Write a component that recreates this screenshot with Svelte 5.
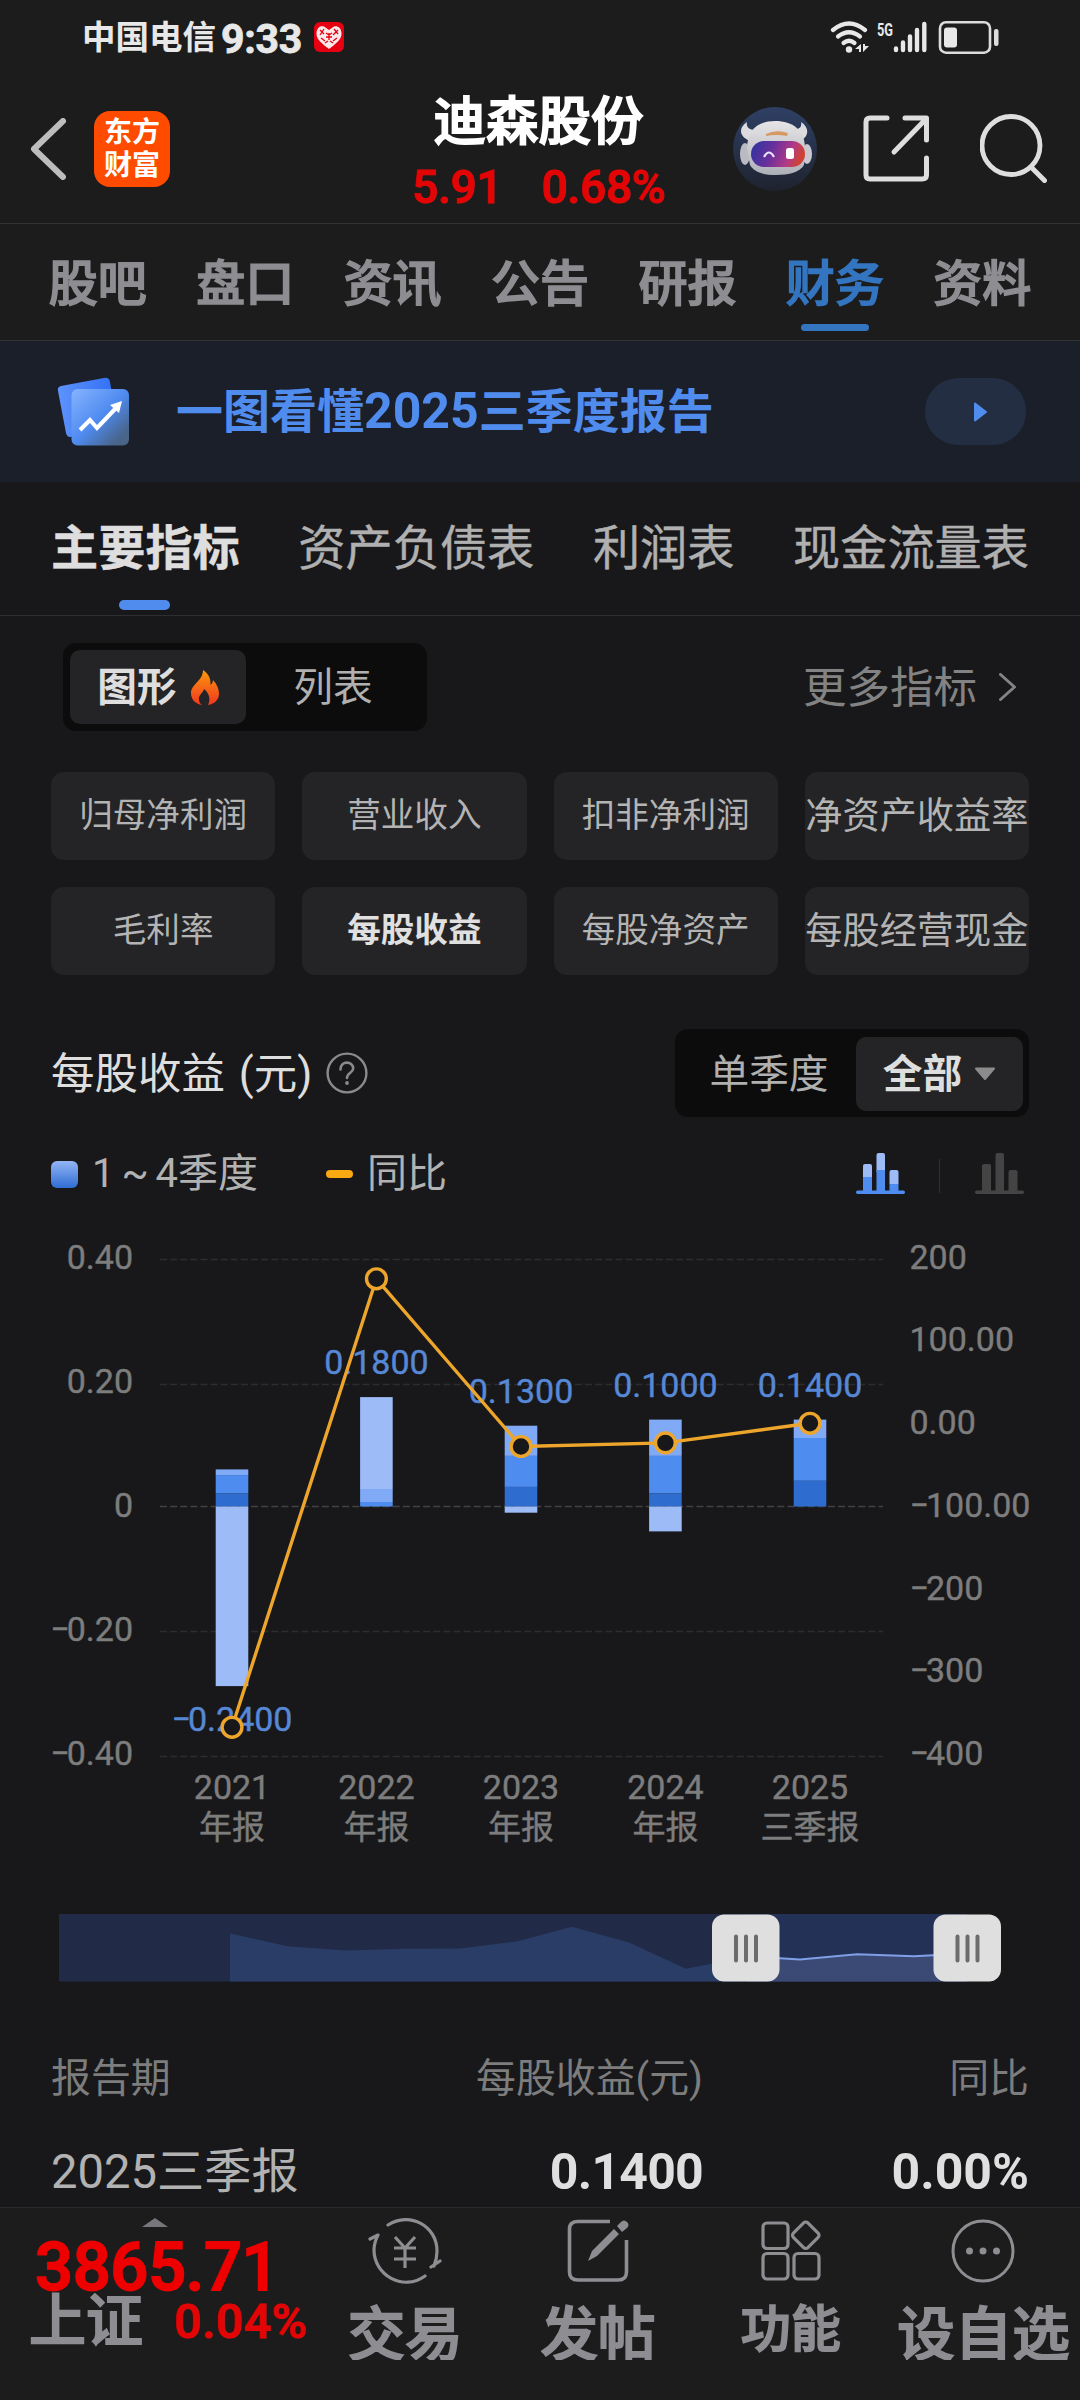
<script>
  // stock detail page, finance tab
  const tabs = ["股吧", "盘口", "资讯", "公告", "研报", "财务", "资料"];
  const reports = ["主要指标", "资产负债表", "利润表", "现金流量表"];
  const metrics = [
    "归母净利润",
    "营业收入",
    "扣非净利润",
    "净资产收益率",
    "毛利率",
    "每股收益",
    "每股净资产",
    "每股经营现金",
  ];

  let activeTab = $state("财务");
  let activeReport = $state("主要指标");
  let activeMetric = $state("每股收益");

  // quarter colours, Q1 is the darkest
  const q1 = "#2e6cd0";
  const q2 = "#4f8cf0";
  const q3 = "#80aaf5";
  const q4 = "#9cbbf7";

  const barWidth = 32.6;
  const gridLines = [1259.5, 1384.5, 1506.5, 1631.5, 1756.5];

  const leftAxis = ["0.40", "0.20", "0", "−0.20", "−0.40"];
  const rightAxis = ["200", "100.00", "0.00", "−100.00", "−200", "−300", "−400"];

  // the minus sign of the font is too wide for the axis
  const kern = (label) => (label[0] === "−" ? "0 -3" : "0");

  // segments: [top, bottom, colour]
  const years = [
    {
      year: "2021",
      name: "年报",
      x: 232,
      value: "−0.2400",
      labelY: 1731,
      pointY: 1727.3,
      segments: [
        [1469.4, 1475.1, q3],
        [1475.1, 1493.5, q2],
        [1493.5, 1506.5, q1],
        [1506.5, 1686.1, q4],
      ],
    },
    {
      year: "2022",
      name: "年报",
      x: 376.4,
      value: "0.1800",
      labelY: 1374,
      pointY: 1278.8,
      segments: [
        [1397.1, 1489, q4],
        [1489, 1502, q3],
        [1502, 1506.5, q2],
      ],
    },
    {
      year: "2023",
      name: "年报",
      x: 521,
      value: "0.1300",
      labelY: 1403,
      pointY: 1446.5,
      segments: [
        [1425.7, 1455.9, q3],
        [1455.9, 1486.9, q2],
        [1486.9, 1506.5, q1],
        [1506.5, 1512.7, q4],
      ],
    },
    {
      year: "2024",
      name: "年报",
      x: 665.4,
      value: "0.1000",
      labelY: 1397,
      pointY: 1442.9,
      segments: [
        [1419.6, 1455.9, q3],
        [1455.9, 1493.5, q2],
        [1493.5, 1506.5, q1],
        [1506.5, 1531.4, q4],
      ],
    },
    {
      year: "2025",
      name: "三季报",
      x: 810,
      value: "0.1400",
      labelY: 1397,
      pointY: 1423.3,
      segments: [
        [1419.6, 1438, q3],
        [1438, 1480.8, q2],
        [1480.8, 1506.5, q1],
      ],
    },
  ];

  const linePoints = years.map((d) => `${d.x},${d.pointY}`).join(" ");
</script>

<div class="page">
  <div class="status">
    <span class="carrier">中国电信</span>
    <span class="time">9:33</span>
    <svg class="heart" width="30" height="30" viewBox="0 0 30 30">
      <rect width="30" height="30" rx="6" fill="#e60012" />
      <path d="M15 27C9 22 2 18 2.500 11C3 5 7 3.500 10 4.500L15 8L20 4.500C24 3.500 27 6 27.500 11C28 18 21 22 15 27Z" fill="#fbe9e9" />
      <path d="M6 8l4 4M10 7l-4 6M20 7l4 5M24 8l-5 5M12 11l3 2 3-2M12 15h6M15 11v7M7 16l4 3M23 16l-4 3M11 21l3-2M19 21l-3-2" stroke="#e60012" stroke-width="1.300" fill="none" />
    </svg>
    <div class="status-right">
      <svg width="170" height="36" viewBox="830 18 170 36">
        <g fill="none" stroke="#e8e8e8" stroke-width="4.200" stroke-linecap="round">
          <path d="M833 29Q849 16 865 29" />
          <path d="M838 35.500Q849 27 860 35.500" />
          <path d="M843.500 42Q849 37.500 854.500 42" />
        </g>
        <circle cx="849" cy="48.500" r="3.200" fill="#e8e8e8" />
        <path d="M861 43v8h-2v-3h-4zM863 43v8l6-6h-4v-2z" fill="#e8e8e8" />
        <text x="877" y="34.500" class="net" textLength="16" lengthAdjust="spacingAndGlyphs">5G</text>
        <g stroke="#e8e8e8" stroke-width="4.400" stroke-linecap="round">
          <path d="M896 47.500v1.500M903 41.500v7.500M910 35.500v13.500M917 29v20M924.300 23v26" />
        </g>
        <rect x="940" y="21.200" width="50" height="30.500" rx="6" fill="none" stroke="#dcdcdc" stroke-width="2.600" />
        <rect x="944" y="26.500" width="13" height="20" rx="3" fill="#e8e8e8" />
        <rect x="994" y="28" width="4.500" height="17" rx="2" fill="#dcdcdc" />
      </svg>
    </div>
  </div>

  <header>
    <div class="left">
      <svg width="36" height="62" viewBox="0 0 36 62">
        <path d="M33 3L4 31L33 59" fill="none" stroke="#bdbdbd" stroke-width="6" stroke-linecap="round" stroke-linejoin="round" />
      </svg>
      <div class="logo"><span>东方</span><span>财富</span></div>
    </div>
    <div class="stock">
      <h1>迪森股份</h1>
      <p class="price"><span>5.91</span><span>0.68%</span></p>
    </div>
    <div class="right">
      <svg width="84" height="84" viewBox="0 0 84 84">
        <defs>
          <linearGradient id="sky" x1="0" y1="0" x2="0" y2="1">
            <stop offset="0" stop-color="#2f4065" />
            <stop offset="1" stop-color="#1e232e" />
          </linearGradient>
          <linearGradient id="visor" x1="0" y1="0" x2="1" y2="0.2">
            <stop offset="0" stop-color="#2a35a0" />
            <stop offset="0.45" stop-color="#6a2f9c" />
            <stop offset="0.8" stop-color="#b23a86" />
            <stop offset="1" stop-color="#cf4238" />
          </linearGradient>
          <linearGradient id="fur" x1="0" y1="0" x2="0" y2="1">
            <stop offset="0" stop-color="#e6e4e6" />
            <stop offset="1" stop-color="#aeb0b9" />
          </linearGradient>
        </defs>
        <circle cx="42" cy="42" r="42" fill="url(#sky)" />
        <path d="M14 15C6 20 5 29 17 34L22 23C16 23 13 20 14 15ZM68 15C76 20 77 29 67 34L60 22C67 23 69 19 68 15Z" fill="#dcdbe0" />
        <ellipse cx="12" cy="47" rx="5" ry="11" fill="#b9bac2" />
        <ellipse cx="74" cy="47" rx="5" ry="10" fill="#c9c9cf" />
        <path d="M14 42C14 22 26 14 42 14C60 14 72 23 72 42L71 58C67 65 56 68 43 68C30 68 21 65 17 58Z" fill="url(#fur)" />
        <path d="M33 27Q43 22 55 26L54 29Q43 27 33 29Z" fill="#d59a63" />
        <rect x="18" y="34" width="54" height="26" rx="13" fill="url(#visor)" />
        <path d="M31 50Q36 41 41 50" fill="none" stroke="#e9e4ff" stroke-width="2.200" />
        <rect x="53" y="41" width="8" height="11" rx="2.500" fill="#fff" />
      </svg>
      <svg class="share" width="67" height="67" viewBox="0 0 67 67">
        <path d="M24 3H7Q3 3 3 7V60Q3 64 7 64H59Q63.500 64 63.500 60V43M42 3H63.500V25M62 5L31 37" fill="none" stroke="#dedede" stroke-width="5" stroke-linecap="round" stroke-linejoin="round" />
      </svg>
      <svg width="67" height="69" viewBox="0 0 67 69">
        <circle cx="31" cy="31.500" r="29" fill="none" stroke="#dedede" stroke-width="4.800" />
        <path d="M51 53L64.500 66.500" stroke="#dedede" stroke-width="5" stroke-linecap="round" />
      </svg>
    </div>
  </header>

  <nav class="tabs">
    {#each tabs as tab}
      <button class:active={tab === activeTab} onclick={() => (activeTab = tab)}>{tab}</button>
    {/each}
  </nav>

  <section class="banner">
    <svg width="84" height="84" viewBox="50 371 84 84">
      <defs>
        <linearGradient id="back" x1="0" y1="0" x2="1" y2="0">
          <stop offset="0" stop-color="#5e93fb" />
          <stop offset="1" stop-color="#2f6df5" />
        </linearGradient>
        <linearGradient id="front" x1="0" y1="0" x2="1" y2="1">
          <stop offset="0" stop-color="#86b4ff" />
          <stop offset="0.5" stop-color="#4f8bf0" />
          <stop offset="0.85" stop-color="#48658c" />
          <stop offset="1" stop-color="#4a6480" />
        </linearGradient>
      </defs>
      <path d="M61 387L104 379Q109 378 110 383L118 429L70 438Q67 438 66 434L58 392Q57 388 61 387Z" fill="url(#back)" />
      <rect x="71.500" y="390" width="57.500" height="56.500" rx="6" fill="url(#front)" />
      <path d="M80 431L90 421L97 429L116 409" fill="none" stroke="#fff" stroke-width="4" />
      <path d="M122 402L119 414L110 406Z" fill="#fff" />
    </svg>
    <p>一图看懂<span>2025</span>三季度报告</p>
    <div class="play">
      <svg width="15" height="20" viewBox="0 0 15 20">
        <path d="M2 1.500L13 10L2 18.500Z" fill="#508cee" stroke="#508cee" stroke-width="2" stroke-linejoin="round" />
      </svg>
    </div>
  </section>

  <nav class="reports">
    {#each reports as report}
      <button class:active={report === activeReport} onclick={() => (activeReport = report)}>{report}</button>
    {/each}
  </nav>

  <main>
    <div class="row view">
      <div class="switch">
        <span class="on">
          图形
          <svg width="28" height="35" viewBox="0 0 28 35">
            <defs>
              <linearGradient id="fire" x1="0" y1="0" x2="0" y2="1">
                <stop offset="0" stop-color="#fb9a0c" />
                <stop offset="1" stop-color="#f2361f" />
              </linearGradient>
            </defs>
            <path d="M12 0C18 4 20 9 19.500 15Q22 13 22 10C26 14 28 19 28 24C28 29 24 34 17 35C20 29 18 23 13 19C12 23 7 25 8 30Q8 33 11 35C4 34 0 29 0 23C0 14 12 11 12 0Z" fill="url(#fire)" />
          </svg>
        </span>
        <span class="off">列表</span>
      </div>
      <div class="more">
        更多指标
        <svg width="18" height="28" viewBox="0 0 18 28">
          <path d="M1.500 1.500L15.500 14L1.500 26.500" fill="none" stroke="#838383" stroke-width="3" stroke-linecap="round" stroke-linejoin="round" />
        </svg>
      </div>
    </div>

    <div class="metrics">
      {#each metrics as metric}
        <button
          class:active={metric === activeMetric}
          class:long={metric.length > 5}
          onclick={() => (activeMetric = metric)}>{metric}</button
        >
      {/each}
    </div>

    <div class="row heading">
      <h2>每股收益 (元)</h2>
      <svg width="42" height="42" viewBox="0 0 42 42">
        <circle cx="21" cy="21" r="19.400" fill="none" stroke="#8a8a8a" stroke-width="2.400" />
        <path d="M14.500 17.500C14.500 8 27.500 9 27.200 16.500C27 21 21 20.500 21 26" fill="none" stroke="#8a8a8a" stroke-width="2.600" stroke-linecap="round" />
        <circle cx="21" cy="31" r="1.900" fill="#8a8a8a" />
      </svg>
      <div class="switch period">
        <span class="off">单季度</span>
        <span class="on">
          全部
          <svg width="22" height="14" viewBox="0 0 22 14">
            <path d="M2 1.500H20L11 12Z" fill="#8c8c8c" stroke="#8c8c8c" stroke-width="2" stroke-linejoin="round" />
          </svg>
        </span>
      </div>
    </div>

    <div class="row legend">
      <i class="square"></i>
      <span class="quarters">1 ~ 4季度</span>
      <i class="dash"></i>
      <span>同比</span>
      <div class="modes">
        <svg width="49" height="42" viewBox="0 0 49 42">
          <path d="M7 13q0-2 2-2h5q2 0 2 2v11H7zM20.500 2q0-2 2-2h4.500q2 0 2 2v17H20.500zM33.500 19q0-2 2-2h5q2 0 2 2v12h-9z" fill="#9cbbf7" />
          <path d="M7 24h9v15H7zM20.500 17H29v22h-8.500zM33.500 31h9v8h-9z" fill="#4f8cf0" />
          <rect y="37.500" width="49" height="3.500" rx="1.700" fill="#4f8cf0" />
        </svg>
        <i class="divider"></i>
        <svg width="49" height="42" viewBox="0 0 49 42">
          <path d="M7 13q0-2 2-2h5q2 0 2 2v26H7zM20.500 2q0-2 2-2h4.500q2 0 2 2v37h-8.500zM33.500 19q0-2 2-2h5q2 0 2 2v20h-9z" fill="#444445" />
          <rect y="37.500" width="49" height="3.500" rx="1.700" fill="#444445" />
        </svg>
      </div>
    </div>

    <svg class="chart" width="1080" height="670" viewBox="0 1196 1080 670">
      {#each gridLines as y, i}
        <line x1="160" x2="883" y1={y} y2={y} stroke={i === 2 ? "#414143" : "#2d2d2f"} stroke-width="1.500" stroke-dasharray="7 3.120" />
      {/each}
      {#each leftAxis as label, i}
        <text x="133" y={1268.7 + i * 124} dx={kern(label)} text-anchor="end">{label}</text>
      {/each}
      {#each rightAxis as label, i}
        <text x="909.500" y={1268.7 + i * 82.700} dx={kern(label)}>{label}</text>
      {/each}

      {#each years as d}
        {#each d.segments as [top, bottom, color]}
          <rect x={d.x - barWidth / 2} y={top} width={barWidth} height={bottom - top} fill={color} />
        {/each}
        <text class="value" x={d.x} y={d.labelY} dx={kern(d.value)} text-anchor="middle">{d.value}</text>
        <text x={d.x} y="1799" text-anchor="middle">{d.year}</text>
        <text class="name" x={d.x} y="1839" text-anchor="middle">{d.name}</text>
      {/each}

      <polyline points={linePoints} fill="none" stroke="#eda62b" stroke-width="3.400" />
      {#each years as d}
        <circle cx={d.x} cy={d.pointY} r="9.900" fill="#18181a" stroke="#eda62b" stroke-width="3.400" />
      {/each}
    </svg>

    <svg class="slider" width="1080" height="68" viewBox="0 1913.500 1080 68">
      <rect x="59" y="1913.500" width="908" height="67.500" fill="#212a46" />
      <path d="M230 1981V1933L287.500 1945.700L346 1950L403 1948.300L460 1948L516.500 1941L572 1926.300L629 1942L686 1968.300L743 1957V1981Z" fill="#2a3d66" />
      <rect x="746" y="1913.500" width="221" height="67.500" fill="#243156" />
      <path d="M746 1981V1956L780 1957.700L800 1959L857 1953.700L914 1955.700L967 1953V1981Z" fill="#3a4a75" />
      <path d="M746 1956L780 1957.700L800 1959L857 1953.700L914 1955.700L967 1953" fill="none" stroke="#7f9fe6" stroke-width="2" />
      {#each [746, 967.5] as x}
        <rect x={x - 34} y="1914" width="67.500" height="67" rx="12" fill="#dfdfdf" />
        <path d="M{x - 10} 1936v24M{x} 1936v24M{x + 10} 1936v24" stroke="#6c6c6c" stroke-width="4" stroke-linecap="round" />
      {/each}
    </svg>

    <div class="table">
      <div class="line head"><span>报告期</span><span>每股收益(元)</span><span>同比</span></div>
      <div class="line"><span>2025三季报</span><b>0.1400</b><b class="rate">0.00%</b></div>
    </div>
  </main>

  <footer>
    <div class="index">
      <svg width="26" height="9" viewBox="0 0 26 9"><path d="M0 9L13 0L26 9Z" fill="#77777b" /></svg>
      <strong>3865.71</strong>
      <p><span>上证</span><em>0.04%</em></p>
    </div>
    <div class="item">
      <svg width="74" height="68" viewBox="0 0 74 68">
        <g fill="none" stroke="#8e8d92" stroke-width="3.200" stroke-linecap="round" stroke-linejoin="round">
          <path d="M20 8C42-6 69 9 69 34Q69 42 66 49M63 50L72 44" />
          <path d="M57 59C35 75 6 58 6 33Q6 26 10 18L2 22" />
          <path d="M27 20L37 31L47 20M26 31H48M26 42H48M37 31V51" stroke-linecap="butt" />
        </g>
      </svg>
      <span>交易</span>
    </div>
    <div class="item">
      <svg width="62" height="68" viewBox="0 0 62 68">
        <path d="M43 4.500H11Q2.500 4.500 2.500 12V55Q2.500 63 11 63H51Q59.500 63 59.500 55V23" fill="none" stroke="#8e8d92" stroke-width="3.600" />
        <path d="M21 44L25 34L47 12L52 17L30 39ZM50 9L54 5Q57 2 60 5Q63 8 60 11L55 15Z" fill="#8e8d92" />
      </svg>
      <span>发帖</span>
    </div>
    <div class="item small">
      <svg width="60" height="68" viewBox="0 0 60 68">
        <g fill="none" stroke="#8e8d92" stroke-width="3.200">
          <rect x="2" y="6" width="25" height="25.500" rx="4" />
          <rect x="2" y="36.500" width="25" height="25.500" rx="4" />
          <rect x="33" y="36.500" width="25" height="25.500" rx="4" />
          <rect x="34.500" y="8" width="20.500" height="20.500" rx="3" transform="rotate(45 44.750 18.250)" />
        </g>
      </svg>
      <span>功能</span>
    </div>
    <div class="item">
      <svg width="64" height="68" viewBox="0 0 64 68">
        <circle cx="32" cy="34" r="30" fill="none" stroke="#8e8d92" stroke-width="3" />
        <circle cx="18.500" cy="34" r="3.500" fill="#8e8d92" />
        <circle cx="32" cy="34" r="3.500" fill="#8e8d92" />
        <circle cx="45.500" cy="34" r="3.500" fill="#8e8d92" />
      </svg>
      <span>设自选</span>
    </div>
  </footer>
</div>

<style>
  :global(body) {
    background: #18181a;
  }

  .page {
    width: 1080px;
    height: 2400px;
    display: flex;
    flex-direction: column;
    overflow: hidden;
    box-sizing: border-box;
    font-family: Roboto, "Noto Sans CJK SC", sans-serif;
    background: #18181a;
    color: #b2b2b2;
  }

  svg {
    display: block;
    flex: none;
  }

  h1,
  h2,
  p {
    margin: 0;
  }

  button {
    border: 0;
    padding: 0;
    background: none;
    font-family: inherit;
    color: inherit;
    white-space: nowrap;
  }

  .status {
    height: 74px;
    flex: none;
    display: flex;
    align-items: center;
    padding: 0 80px 0 82px;
    background: #1c1c1c;
    color: #e8e8e8;
    font-weight: 700;
  }

  .carrier {
    font-size: 33.5px;
    line-height: 40px;
    padding-top: 2px;
  }

  .time {
    font-size: 41px;
    line-height: 44px;
    margin-left: 5px;
    padding-top: 3px;
    letter-spacing: -0.3px;
    -webkit-text-stroke: 0.8px;
  }

  .heart {
    margin-left: 12px;
  }

  .status-right {
    margin-left: auto;
  }

  .net {
    font-size: 19px;
    font-weight: 700;
    fill: #e8e8e8;
  }

  header {
    height: 149px;
    flex: none;
    display: grid;
    grid-template-columns: 1fr auto 1fr;
    align-items: center;
    padding: 0 33px 0 30px;
    background: #1c1c1c;
    border-bottom: 1px solid #333335;
  }

  .left {
    display: flex;
    align-items: center;
    gap: 28px;
  }

  .logo {
    width: 76px;
    height: 76px;
    border-radius: 16px;
    background: #ff4b00;
    color: #fff;
    display: flex;
    flex-direction: column;
    align-items: center;
    justify-content: center;
    font-size: 28px;
    font-weight: 700;
    line-height: 33px;
  }

  .stock {
    padding-top: 8px;
    text-align: center;
  }

  h1 {
    font-size: 52.5px;
    font-weight: 500;
    line-height: 58px;
    color: #fff;
    -webkit-text-stroke: 1.8px;
  }

  .price {
    display: flex;
    justify-content: center;
    gap: 39px;
    margin-top: 11px;
    font-size: 46px;
    font-weight: 500;
    line-height: 50px;
    letter-spacing: -0.2px;
    color: #e30505;
    -webkit-text-stroke: 1px;
  }

  .right {
    display: flex;
    align-items: center;
    justify-content: flex-end;
    gap: 46px;
  }

  .share {
    margin-right: 4px;
  }

  .tabs {
    height: 116px;
    flex: none;
    display: flex;
    padding: 0 24px;
    background: #1c1c1c;
    border-bottom: 1px solid #333335;
  }

  .tabs button {
    flex: 1;
    position: relative;
    padding-top: 5px;
    font-size: 49px;
    font-weight: 500;
    line-height: 111px;
    color: #8e8d92;
    -webkit-text-stroke: 1.5px;
  }

  .tabs .active {
    color: #3375c0;
  }

  .tabs .active::after,
  .reports .active::after {
    content: "";
    position: absolute;
    left: 50%;
    bottom: 9px;
    width: 68px;
    height: 7px;
    margin-left: -34px;
    border-radius: 4px;
    background: #3375c0;
  }

  .banner {
    height: 141px;
    flex: none;
    display: flex;
    align-items: center;
    padding: 0 54px 0 50px;
    background: #1b1f2a;
  }

  .banner p {
    margin-left: 42px;
    font-size: 47px;
    font-weight: 700;
    line-height: 60px;
    color: #508cee;
    white-space: nowrap;
  }

  .banner p span {
    font-size: 50px;
  }

  .play {
    width: 101px;
    height: 67px;
    margin-left: auto;
    border-radius: 33px;
    background: #232e42;
    display: flex;
    align-items: center;
    padding-left: 48px;
    box-sizing: border-box;
  }

  .reports {
    height: 134px;
    flex: none;
    display: flex;
    justify-content: space-between;
    padding: 0 51px;
    border-bottom: 1px solid #2f2f31;
    box-sizing: border-box;
  }

  .reports button {
    position: relative;
    padding-top: 2px;
    font-size: 47.2px;
    line-height: 131px;
    color: #b0b0b0;
    -webkit-text-stroke: 0.4px;
  }

  .reports .active {
    font-weight: 700;
    color: #dedede;
  }

  .reports .active::after {
    bottom: 5px;
    width: 51px;
    height: 10px;
    margin-left: -26px;
    border-radius: 5px;
    background: #508cee;
  }

  main {
    flex: 1;
    min-height: 0;
    overflow: hidden;
  }

  .row {
    display: flex;
    align-items: center;
    padding: 0 51px;
  }

  .view {
    margin-top: 27px;
    padding-left: 63px;
    justify-content: space-between;
  }

  .switch {
    display: flex;
    height: 88px;
    box-sizing: border-box;
    padding: 7px;
    border-radius: 13px;
    background: #0c0c0c;
    font-size: 39.7px;
    line-height: 77px;
  }

  .switch span {
    display: flex;
    align-items: center;
    justify-content: center;
    height: 74px;
  }

  .on {
    width: 176px;
    gap: 14px;
    border-radius: 10px;
    background: #242426;
    font-weight: 700;
    color: #dedede;
  }

  .off {
    width: 174px;
    color: #b0b0b0;
  }

  .more {
    display: flex;
    align-items: center;
    gap: 22px;
    margin-right: 12px;
    padding-top: 3px;
    font-size: 43.5px;
    line-height: 60px;
    color: #838383;
  }

  .more svg {
    margin-top: -3px;
  }

  .metrics {
    display: grid;
    grid-template-columns: repeat(4, 1fr);
    gap: 27px;
    margin: 41px 51px 0;
  }

  .metrics button {
    height: 88px;
    border-radius: 13px;
    background: #242426;
    font-size: 33.6px;
    line-height: 86px;
    color: #b4b4b4;
  }

  .metrics .long {
    font-size: 37.2px;
  }

  .metrics .active {
    font-weight: 700;
    color: #e0e0e0;
  }

  .heading {
    margin-top: 54px;
  }

  h2 {
    height: 88px;
    font-size: 43.5px;
    font-weight: 400;
    line-height: 91px;
    word-spacing: 3px;
    color: #dedede;
    margin-right: 14px;
  }

  .period {
    margin-left: auto;
    padding: 8px 6px 6px 7px;
  }

  .period .on {
    width: 167px;
    gap: 12px;
  }

  .legend {
    height: 44px;
    margin-top: 35px;
    font-size: 40px;
    line-height: 46px;
  }

  .square {
    width: 27px;
    height: 27px;
    border-radius: 6px;
    background: linear-gradient(#93b5f6, #2f6dd2);
  }

  .quarters {
    margin: 0 68px 0 14px;
    word-spacing: -3px;
  }

  .dash {
    width: 27px;
    height: 8px;
    border-radius: 4px;
    background: #f9a912;
    margin-right: 14px;
  }

  .modes {
    display: flex;
    align-items: center;
    margin: 0 5px 0 auto;
  }

  .divider {
    width: 1px;
    height: 34px;
    margin: 4px 35px 0 34px;
    background: #2f2f31;
  }

  .chart text {
    font-size: 34px;
    fill: #7d7d7d;
    stroke: #7d7d7d;
    stroke-width: 0.4;
  }

  .chart .name {
    font-size: 33px;
  }

  .chart .value {
    fill: #5788d6;
    stroke: #5788d6;
  }

  .slider {
    margin-top: 48px;
  }

  .table {
    padding: 0 51px;
    margin-top: 66px;
  }

  .line {
    display: grid;
    grid-template-columns: 300px 352px 1fr;
    height: 66px;
    font-size: 47.2px;
    line-height: 66px;
  }

  .head {
    height: 91px;
    font-size: 39.9px;
    line-height: 62px;
    color: #7d7d7d;
  }

  .line > :not(:first-child) {
    text-align: right;
  }

  .line b {
    font-size: 50px;
    letter-spacing: -0.8px;
    color: #dfdfdf;
  }

  .line .rate {
    letter-spacing: 0;
  }

  footer {
    height: 193px;
    flex: none;
    box-sizing: border-box;
    display: flex;
    background: #1c1c1c;
    border-top: 1px solid #2a2a2b;
    color: #8e8d92;
    font-weight: 500;
  }

  .index {
    width: 309px;
    padding-left: 29px;
    box-sizing: border-box;
  }

  .index svg {
    margin: 10px 0 0 113px;
  }

  .index strong {
    display: block;
    margin: 13px 0 0 6px;
    font-size: 67px;
    font-weight: 500;
    line-height: 54px;
    letter-spacing: -0.4px;
    color: #ef0000;
    -webkit-text-stroke: 1.8px;
  }

  .index p {
    display: flex;
    align-items: center;
    margin-top: -2px;
  }

  .index p span {
    font-size: 57px;
    line-height: 60px;
    -webkit-text-stroke: 1.8px;
  }

  .index em {
    margin-left: 31px;
    font-size: 48px;
    font-style: normal;
    line-height: 60px;
    letter-spacing: 0.6px;
    color: #e30505;
    -webkit-text-stroke: 1px;
  }

  .item {
    width: 192.7px;
    display: flex;
    flex-direction: column;
    align-items: center;
    padding-top: 9px;
  }

  .item span {
    height: 75px;
    overflow: hidden;
    font-size: 57.5px;
    line-height: 102px;
    white-space: nowrap;
    -webkit-text-stroke: 1.8px;
  }

  .small span {
    font-size: 50px;
    line-height: 90px;
  }
</style>
